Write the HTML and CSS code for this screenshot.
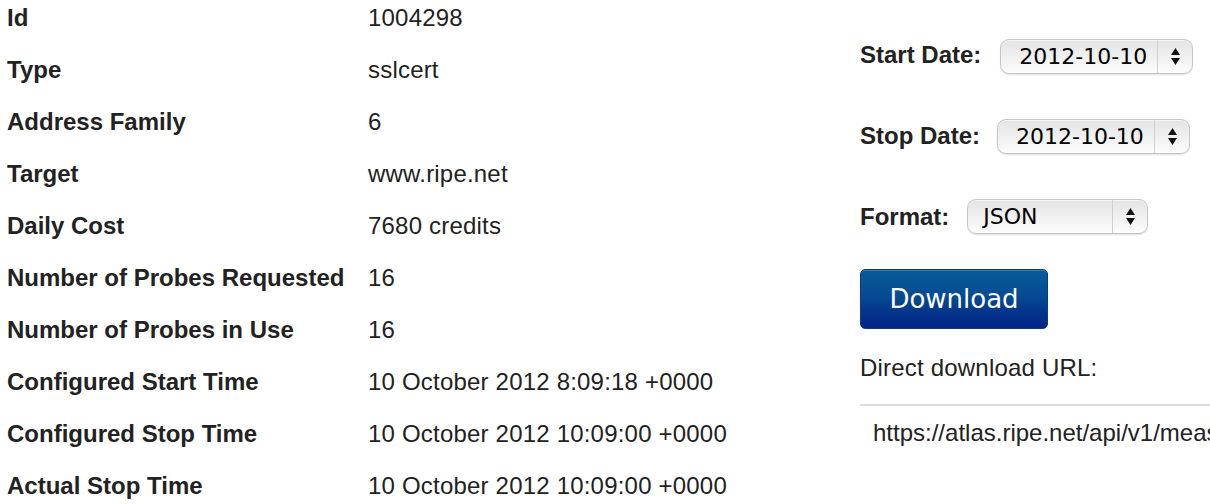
FILE: index.html
```html
<!DOCTYPE html>
<html>
<head>
<meta charset="utf-8">
<title>Measurement 1004298</title>
<link rel="stylesheet" href="styles.css">
</head>
<body>
<div class="page">
  <div class="details">
    <div class="row"><div class="label">Id</div><div class="value">1004298</div></div>
    <div class="row"><div class="label">Type</div><div class="value">sslcert</div></div>
    <div class="row"><div class="label">Address Family</div><div class="value">6</div></div>
    <div class="row"><div class="label">Target</div><div class="value">www.ripe.net</div></div>
    <div class="row"><div class="label">Daily Cost</div><div class="value">7680 credits</div></div>
    <div class="row"><div class="label">Number of Probes Requested</div><div class="value">16</div></div>
    <div class="row"><div class="label">Number of Probes in Use</div><div class="value">16</div></div>
    <div class="row"><div class="label">Configured Start Time</div><div class="value">10 October 2012 8:09:18 +0000</div></div>
    <div class="row"><div class="label">Configured Stop Time</div><div class="value">10 October 2012 10:09:00 +0000</div></div>
    <div class="row"><div class="label">Actual Stop Time</div><div class="value">10 October 2012 10:09:00 +0000</div></div>
  </div>
  <div class="download">
    <div class="field field-start">
      <span class="field-label">Start Date:</span>
      <div class="select select-date">
        <span class="select-value">2012-10-10</span>
        <span class="select-arrows"><svg width="9" height="17" viewBox="0 0 9 17"><path d="M4.5 0 L9 7 L0 7 Z M0 10 L9 10 L4.5 17 Z" fill="#111"/></svg></span>
      </div>
    </div>
    <div class="field field-stop">
      <span class="field-label">Stop Date:</span>
      <div class="select select-date">
        <span class="select-value">2012-10-10</span>
        <span class="select-arrows"><svg width="9" height="17" viewBox="0 0 9 17"><path d="M4.5 0 L9 7 L0 7 Z M0 10 L9 10 L4.5 17 Z" fill="#111"/></svg></span>
      </div>
    </div>
    <div class="field field-format">
      <span class="field-label">Format:</span>
      <div class="select select-format">
        <span class="select-value">JSON</span>
        <span class="select-arrows"><svg width="9" height="17" viewBox="0 0 9 17"><path d="M4.5 0 L9 7 L0 7 Z M0 10 L9 10 L4.5 17 Z" fill="#111"/></svg></span>
      </div>
    </div>
    <button class="btn-download" type="button">Download</button>
    <div class="direct-label">Direct download URL:</div>
    <div class="direct-url">https://atlas.ripe.net/api/v1/measurement/1004298/result/?start=1349827200&amp;stop=1349913599&amp;format=json</div>
  </div>
</div>
</body>
</html>
```

FILE: styles.css
```css
html, body {
  margin: 0;
  padding: 0;
  background: #ffffff;
  overflow: hidden;
}

body {
  font-family: "Liberation Sans", Arial, Helvetica, sans-serif;
  color: #222222;
  font-size: 24px;
}

.page {
  display: flex;
  width: 1210px;
  height: 504px;
  overflow: hidden;
}

.details {
  width: 853px;
  flex: none;
  padding-left: 7px;
}

.row {
  display: flex;
  height: 52px;
  line-height: 36px;
  white-space: nowrap;
}

.label {
  width: 361px;
  flex: none;
  font-weight: bold;
}

.value {
  font-weight: normal;
  letter-spacing: 0.2px;
}

.download {
  flex: 1;
  min-width: 0;
  display: flex;
  flex-direction: column;
  align-items: flex-start;
  white-space: nowrap;
}

.field {
  display: flex;
  align-items: flex-start;
  line-height: 28px;
}

.field-start { margin-top: 39px; }
.field-stop { margin-top: 45px; }
.field-format { margin-top: 45px; }

.field-label {
  font-weight: bold;
}

.field-start .field-label { margin-right: 19px; margin-top: 2px; }
.field-stop .field-label { margin-right: 17px; margin-top: 3px; }
.field-format .field-label { margin-right: 18px; margin-top: 4px; }

.select {
  display: flex;
  align-items: stretch;
  height: 33px;
  border: 1px solid #c6c6c6;
  border-radius: 9px;
  background: linear-gradient(to bottom, #e4e4e4 0%, #efefef 45%, #f6f6f6 75%, #fdfdfd 100%);
  box-shadow: 0 1px 1px rgba(0, 0, 0, 0.12), inset 0 1px 0 rgba(255, 255, 255, 0.6);
  font-family: "DejaVu Sans", Verdana, sans-serif;
  font-size: 22px;
  color: #000000;
  box-sizing: content-box;
}

.select-date { width: 191px; }
.select-format { width: 179px; }

.select-value {
  flex: 1;
  display: flex;
  align-items: center;
  padding-left: 18px;
}

.select-format .select-value { padding-left: 15px; }

.select-arrows {
  width: 34px;
  flex: none;
  border-left: 1px solid #cfcfcf;
  display: flex;
  align-items: center;
  justify-content: center;
}

.btn-download {
  margin-top: 35px;
  width: 188px;
  height: 60px;
  padding: 0;
  border: 1px solid #0a3f7f;
  border-radius: 5px;
  background: linear-gradient(to bottom, #0a5b9b 0%, #064a93 45%, #03308a 80%, #022488 100%);
  box-shadow: inset 0 1px 0 rgba(255, 255, 255, 0.18);
  color: #ffffff;
  font-family: "DejaVu Sans", Verdana, sans-serif;
  font-size: 26px;
  line-height: 58px;
  text-align: center;
  cursor: pointer;
}

.direct-label {
  margin-top: 25px;
  line-height: 28px;
  font-size: 24px;
  letter-spacing: 0.2px;
}

.direct-url {
  align-self: stretch;
  margin-top: 22px;
  border-top: 2px solid #dddddd;
  padding-top: 13px;
  padding-left: 13px;
  line-height: 28px;
  font-size: 24px;
  overflow: hidden;
}
```
